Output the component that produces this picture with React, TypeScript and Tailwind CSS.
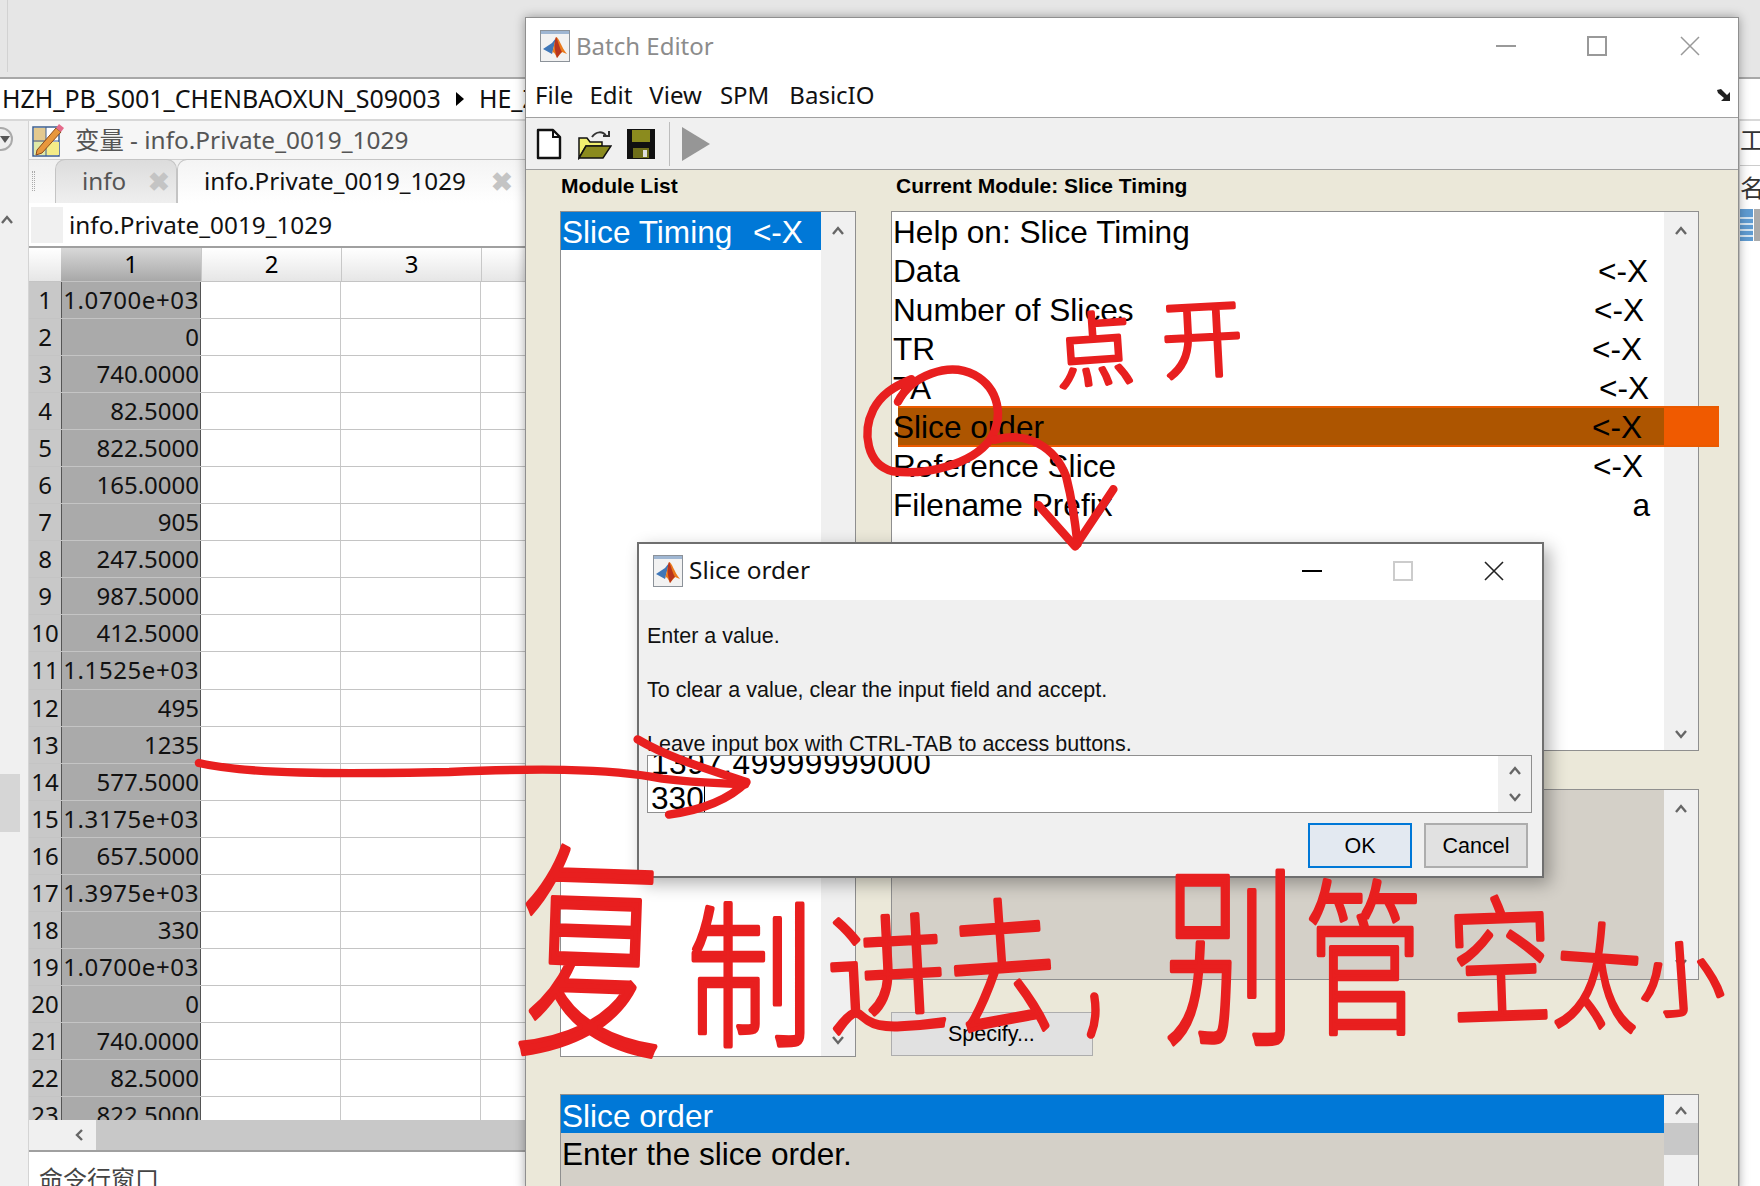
import React from 'react';

const cells = [
  '1.0700e+03', '0', '740.0000', '82.5000', '822.5000', '165.0000', '905', '247.5000',
  '987.5000', '412.5000', '1.1525e+03', '495', '1235', '577.5000', '1.3175e+03', '657.5000',
  '1.3975e+03', '330', '1.0700e+03', '0', '740.0000', '82.5000', '822.5000',
];

const moduleRows = [
  { label: 'Help on: Slice Timing', mark: '', pad: 'pr-[16px]' },
  { label: 'Data', mark: '<-X', pad: 'pr-[16px]' },
  { label: 'Number of Slices', mark: '<-X', pad: 'pr-[20px]' },
  { label: 'TR', mark: '<-X', pad: 'pr-[22px]' },
  { label: 'TA', mark: '<-X', pad: 'pr-[15px]' },
  { label: 'Slice order', mark: '<-X', pad: 'pr-[22px]' },
  { label: 'Reference Slice', mark: '<-X', pad: 'pr-[21px]' },
  { label: 'Filename Prefix', mark: 'a', pad: 'pr-[14px]' },
];

function Chevron({ down = false }: { down?: boolean }) {
  return (
    <svg width="14" height="10" viewBox="0 0 14 10" className="block">
      <polyline
        points={down ? '2,2 7,8 12,2' : '2,8 7,2 12,8'}
        fill="none"
        stroke="#666"
        strokeWidth="2.4"
      />
    </svg>
  );
}

function MatlabIcon() {
  return (
    <svg width="30" height="32" viewBox="0 0 30 32" className="block shrink-0">
      <rect x="0.5" y="0.5" width="29" height="31" fill="#f2f2f2" stroke="#8c9299" />
      <rect x="1" y="1" width="28" height="3" fill="#9fb6d2" />
      <path d="M3 19 L12 13 L16 8 L12 24 Z" fill="#3f77b8" />
      <path d="M16 7 C19 7 21 17 27 24 L22 22 L17 28 C15 23 13 20 12 24 Z" fill="#ea7a1c" />
      <path d="M16 7 C14 12 14 18 17 28 C19 25 20 23 22 22 C19 17 18 10 16 7 Z" fill="#b8351e" />
    </svg>
  );
}

function ScrollStrip({ children }: { children?: React.ReactNode }) {
  return (
    <div className="flex w-[34px] shrink-0 flex-col items-center justify-between bg-[#f0f0f0] pb-[11px] pt-[14px]">
      {children}
    </div>
  );
}

function Hand({ ch, cx, cy, w, h, rot = 0 }: { ch: string; cx: number; cy: number; w: number; h: number; rot?: number }) {
  const sx = w / 100;
  const sy = h / 100;
  return (
    <text
      transform={`translate(${cx} ${cy}) rotate(${rot}) scale(${sx} ${sy})`}
      x="0"
      y="38"
      fontSize="100"
      fontWeight="300"
      textAnchor="middle"
      fill="#e81f1f"
      stroke="#e81f1f"
      strokeWidth={3.5 / ((sx + sy) / 2)}
      strokeLinejoin="round"
      fontFamily="'Noto Sans CJK SC', sans-serif"
    >
      {ch}
    </text>
  );
}

function Annotations() {
  return (
    <svg
      width="1760"
      height="1186"
      viewBox="0 0 1568 1057"
      className="pointer-events-none absolute left-0 top-0"
    >
      <g fill="none" stroke="#e81f1f" strokeWidth="7.5" strokeLinecap="round" strokeLinejoin="round">
        <path d="M800 358 C812 335 845 322 868 334 C890 346 895 372 882 392 C866 414 825 424 795 420 C772 414 768 385 778 365 C785 352 795 345 812 338" />
        <path d="M886 392 C915 384 940 398 950 425 C955 445 958 465 960 485" />
        <path d="M925 450 L958 487 L992 436" />
        <path d="M177 680 C220 690 300 690 400 688 C470 685 540 684 590 694 C620 698 645 698 664 699" />
        <path d="M568 659 C600 678 640 688 665 697 C650 712 625 722 596 726" />
        <path d="M975 888 C977 900 976 912 972 922" />
      </g>
      <Hand ch="点" cx={975} cy={311} w={70} h={72} rot={-4} />
      <Hand ch="开" cx={1071} cy={301} w={72} h={76} rot={-3} />
      <Hand ch="复" cx={527} cy={848} w={132} h={205} rot={2} />
      <Hand ch="制" cx={668} cy={868} w={112} h={140} rot={0} />
      <Hand ch="进" cx={790} cy={868} w={108} h={118} rot={-3} />
      <Hand ch="去" cx={893} cy={862} w={94} h={132} rot={-4} />
      <Hand ch="别" cx={1096} cy={852} w={118} h={172} rot={0} />
      <Hand ch="管" cx={1215} cy={853} w={106} h={150} rot={0} />
      <Hand ch="空" cx={1337} cy={856} w={92} h={124} rot={-2} />
      <Hand ch="太" cx={1424} cy={870} w={76} h={104} rot={4} />
      <Hand ch="小" cx={1498} cy={872} w={76} h={72} rot={-4} />
    </svg>
  );
}

function VariablesPanel() {
  return (
    <div className="flex min-w-0 flex-1 flex-col">
      <div className="flex h-[38px] shrink-0 items-center gap-[11px] bg-[#f6f6f6] pl-[3px] text-[24.4px] text-[#555]">
        <svg width="32" height="34" viewBox="0 0 32 34" className="shrink-0">
          <rect x="1" y="4" width="26" height="29" fill="#fff" stroke="#3d5f8f" strokeWidth="1.5" />
          <rect x="2" y="5" width="12" height="14" fill="#e3c98f" />
          <rect x="14" y="19" width="13" height="13" fill="#f4ec88" />
          <rect x="2" y="19" width="12" height="13" fill="#dfe9a8" />
          <path d="M1 18 H27 M14 4 V33" stroke="#3d5f8f" strokeWidth="1" />
          <path d="M5 27 L24 5 L29 9 L10 30 L4 32 Z" fill="#e8973c" stroke="#8a4a1a" strokeWidth="1" />
          <path d="M24 5 L27 1 L32 5 L29 9 Z" fill="#e56a8a" />
        </svg>
        <span>变量 - info.Private_0019_1029</span>
      </div>
      <div className="flex h-[44px] shrink-0 items-end border-t border-[#cfcfcf] bg-[linear-gradient(#f0f0f0,#fafafa)] pl-[3px] text-[24.2px]">
        <div className="mb-[12px] mr-[20px] h-[20px] w-[3px] border-x border-dotted border-[#aaa]" />
        <div className="flex h-[44px] w-[122px] items-center rounded-t-[10px] border border-b-0 border-[#c4c4c4] bg-[linear-gradient(#dcdcdc,#efefef)] pb-[1px] pl-[26px] pr-[6px] text-[#555]">
          <span className="flex-1">info</span>
          <span className="text-[26px] font-bold leading-none text-[#c4c4c4]">✖</span>
        </div>
        <div className="flex h-[44px] flex-1 items-center rounded-t-[10px] border border-b-0 border-[#c4c4c4] bg-[linear-gradient(#f4f4f4,#fff)] pb-[1px] pl-[26px] text-[#111]">
          <span className="w-[287px]">info.Private_0019_1029</span>
          <span className="text-[26px] font-bold leading-none text-[#c4c4c4]">✖</span>
        </div>
      </div>
      <div className="flex h-[43px] shrink-0 items-center gap-[6px] bg-white pl-[2px] pt-[1px] text-[24.3px] text-[#111]">
        <div className="h-[36px] w-[32px] bg-[#f0f0f0]" />
        <span>info.Private_0019_1029</span>
      </div>
      <div className="h-[874px] shrink-0 overflow-hidden border-t-2 border-[#a0a0a0] bg-white">
        <div className="grid h-[33px] grid-cols-[32px_140px_140px_140px_140px_140px_140px_140px_140px_140px_140px_140px_140px] bg-[linear-gradient(#fff,#e6e6e6)] text-center text-[24px] leading-[31px] text-black">
          <div />
          <div className="bg-[linear-gradient(#d8d8d8,#a8a8a8)]">1</div>
          <div className="border-l border-[#c8c8c8]">2</div>
          <div className="border-l border-[#c8c8c8]">3</div>
          <div className="border-l border-[#c8c8c8]" />
        </div>
        {cells.map((v, i) => (
          <div key={i} className="grid h-[37.05px] grid-cols-[32px_140px_1fr] border-t border-[#c4c4c4] text-[24px] leading-[36px] text-[#111]">
            <div className="bg-[#c8c8c8] text-center">{i + 1}</div>
            <div className={v.includes('e') ? 'overflow-hidden whitespace-nowrap border-x border-[#555] bg-[#aaaaaa] pr-[1px] text-right tracking-[0.6px]' : 'overflow-hidden border-x border-[#555] bg-[#aaaaaa] pr-[1px] text-right'}>{v}</div>
            <div className="grid grid-cols-[140px_140px_140px]">
              <div className="border-r border-[#c8c8c8]" />
              <div className="border-r border-[#c8c8c8]" />
              <div />
            </div>
          </div>
        ))}
      </div>
      <div className="flex h-[32px] shrink-0 border-b-2 border-[#a0a0a0] bg-[#c8c8c8]">
        <div className="flex w-[67px] items-center justify-end bg-[#f0f0f0] pr-[12px]">
          <svg width="10" height="14" viewBox="0 0 10 14">
            <polyline points="8,2 3,7 8,12" fill="none" stroke="#666" strokeWidth="2.4" />
          </svg>
        </div>
      </div>
      <div className="mt-[8px] min-h-0 flex-1 overflow-hidden bg-white pl-[10px] text-[24px] leading-[38px] text-[#444]">命令行窗口</div>
    </div>
  );
}

function BatchEditor() {
  return (
    <div className="absolute left-[525px] top-[17px] flex h-[1175px] w-[1214px] flex-col border border-[#8f8f8f] bg-white font-['Noto_Sans','Noto_Sans_CJK_SC',sans-serif] shadow-[0_0_10px_rgba(0,0,0,0.35)]">
      <div className="flex h-[54px] items-center pl-[14px] pt-[1px] text-[24px] text-[#8c8c8c]">
        <MatlabIcon />
        <span className="ml-[6px]">Batch Editor</span>
        <div className="ml-auto flex items-center pr-[38px]">
          <div className="h-[2px] w-[20px] bg-[#999]" />
          <div className="ml-[71px] h-[20px] w-[20px] border-2 border-[#999]" />
          <svg width="20" height="20" viewBox="0 0 20 20" className="ml-[73px]">
            <path d="M1 1 L19 19 M19 1 L1 19" stroke="#999" strokeWidth="1.5" />
          </svg>
        </div>
      </div>
      <div className="flex h-[46px] items-center border-b border-[#a0a0a0] pl-[9px] pr-[6px] text-[24px] text-[#111]">
        <span className="mr-[16px]">File</span>
        <span className="mr-[17px]">Edit</span>
        <span className="mr-[18px]">View</span>
        <span className="mr-[20px]">SPM</span>
        <span>BasicIO</span>
        <svg width="16" height="14" viewBox="0 0 16 14" className="ml-auto">
          <path d="M1 2 L5 1 L11 7 L14 4 L14 13 L5 13 L8 10 L2 5 Z" fill="#222" />
        </svg>
      </div>
      <div className="flex h-[52px] items-center border-b border-[#a0a0a0] bg-[#f0f0f0] pl-[10px]">
        <svg width="26" height="32" viewBox="0 0 26 32" className="mr-[16px]">
          <path d="M2 2 H17 L24 9 V30 H2 Z" fill="#fff" stroke="#111" strokeWidth="2.4" strokeLinejoin="round" />
          <path d="M17 2 V9 H24" fill="none" stroke="#111" strokeWidth="2" />
        </svg>
        <svg width="34" height="32" viewBox="0 0 34 32" className="mr-[14px]">
          <path d="M1 10 H9 L12 14 H24 V18 H8 L1 30 Z" fill="#f2f070" stroke="#111" strokeWidth="1.5" />
          <path d="M8 18 H33 L25 30 H1 Z" fill="#8b8b1e" stroke="#111" strokeWidth="1.5" />
          <path d="M14 9 C18 3 25 3 28 8 M25 8 H31 V3" fill="none" stroke="#333" strokeWidth="2" />
        </svg>
        <svg width="30" height="32" viewBox="0 0 30 32" className="mr-[13px]">
          <rect x="1" y="1" width="28" height="30" fill="#111" />
          <rect x="6" y="2" width="18" height="12" fill="#8b8b1e" />
          <rect x="7" y="20" width="16" height="10" fill="#6f6f1a" />
          <rect x="17" y="22" width="4" height="7" fill="#ddd" />
        </svg>
        <div className="mr-[11px] h-[44px] w-px bg-[#bdbdbd]" />
        <svg width="30" height="36" viewBox="0 0 30 36">
          <path d="M1 1 L29 18 L1 35 Z" fill="#969696" />
        </svg>
      </div>
      <div className="flex-1 overflow-hidden bg-[#ebe8d9] pl-[34px] font-['Liberation_Sans',sans-serif] text-black">
        <div className="flex">
          <div className="w-[296px]">
            <div className="h-[41px] pl-[1px] pt-[4px] text-[21px] font-bold leading-[24px]">Module List</div>
            <div className="flex h-[846px] border border-[#8f8f8f] bg-white">
              <div className="flex-1 text-[31.6px] leading-[41px]">
                <div className="h-[38px] whitespace-pre bg-[#0078d7] pl-[1px] text-white">Slice Timing  <span className="ml-[3px]">&lt;-X</span></div>
              </div>
              <ScrollStrip>
                <Chevron />
                <Chevron down />
              </ScrollStrip>
            </div>
          </div>
          <div className="ml-[35px] w-[808px]">
            <div className="h-[41px] pl-[5px] pt-[4px] text-[21px] font-bold leading-[24px]">Current Module: Slice Timing</div>
            <div className="relative flex h-[540px] border border-[#8f8f8f] bg-white">
              <div className="flex-1 text-[31.6px] leading-[41px]">
                {moduleRows.map((r) => (
                  <div key={r.label} className={`relative flex h-[39px] justify-between pl-[1px] ${r.pad}`}>
                    {r.label === 'Slice order' && (
                      <div className="absolute bottom-[-1px] left-[6px] right-[-55px] top-[-1px] flex border-y-2 border-[#ea5a00]">
                        <div className="flex-1 bg-[#ad5500]" />
                        <div className="w-[55px] bg-[#f05a00]" />
                      </div>
                    )}
                    <span className="relative">{r.label}</span>
                    <span className="relative">{r.mark}</span>
                  </div>
                ))}
              </div>
              <ScrollStrip>
                <Chevron />
                <Chevron down />
              </ScrollStrip>
            </div>
            <div className="mt-[38px] flex h-[191px] border border-[#8f8f8f] bg-[#d4d0c8]">
              <div className="flex-1" />
              <ScrollStrip>
                <Chevron />
                <Chevron down />
              </ScrollStrip>
            </div>
            <div className="mt-[32px] flex h-[44px] w-[202px] items-center border border-[#adadad] bg-[#e1e1e1] pl-[56px] text-[21.5px]">
              Specify...
            </div>
          </div>
        </div>
        <div className="mt-[37px] flex h-[200px] w-[1139px] border border-[#8f8f8f] bg-[#d4d0c8]">
          <div className="flex-1 text-[31.6px] leading-[43px]">
            <div className="h-[38px] bg-[#0078d7] pl-[1px] text-white">Slice order</div>
            <div className="pl-[1px]">Enter the slice order.</div>
          </div>
          <div className="w-[34px] shrink-0 bg-[#f0f0f0] pt-[11px]">
            <div className="flex justify-center"><Chevron /></div>
            <div className="mt-[7px] h-[32px] bg-[#c8c8c8]" />
          </div>
        </div>
      </div>
    </div>
  );
}

function SliceDialog() {
  return (
    <div className="absolute left-[637px] top-[542px] flex h-[336px] w-[907px] flex-col border-2 border-[#6f6f6f] bg-[#f0f0f0] font-['Liberation_Sans',sans-serif] text-black shadow-[6px_6px_16px_rgba(0,0,0,0.3)]">
      <div className="flex h-[56px] items-center bg-white pb-[3px] pl-[14px] font-['Noto_Sans',sans-serif] text-[24.4px] text-[#111]">
        <MatlabIcon />
        <span className="ml-[6px]">Slice order</span>
        <div className="ml-auto flex items-center gap-[71px] pr-[38px]">
          <div className="h-[2px] w-[20px] bg-black" />
          <div className="h-[20px] w-[20px] border-2 border-[#ccc]" />
          <svg width="20" height="20" viewBox="0 0 20 20">
            <path d="M1 1 L19 19 M19 1 L1 19" stroke="#222" strokeWidth="1.6" />
          </svg>
        </div>
      </div>
      <div className="flex h-[155px] flex-col pl-[8px] pt-[9px] text-[21.5px] leading-[54px] text-[#111]">
        <p>Enter a value.</p>
        <p>To clear a value, clear the input field and accept.</p>
        <p>Leave input box with CTRL-TAB to access buttons.</p>
      </div>
      <div className="ml-[8px] flex h-[58px] w-[885px] border border-[#8f8f8f] bg-white">
        <div className="relative flex-1 overflow-hidden pl-[3px] text-[31.6px] leading-[35px]">
          <div className="mt-[-10px] tracking-[0.5px]">1397.49999999000</div>
          <div className="relative w-fit pr-[1px]">
            330
            <span className="absolute bottom-[2px] right-0 h-[30px] w-px bg-black" />
          </div>
        </div>
        <div className="flex w-[33px] shrink-0 flex-col items-center justify-between bg-[#f0f0f0] py-[10px]">
          <Chevron />
          <Chevron down />
        </div>
      </div>
      <div className="mr-[14px] mt-[10px] flex justify-end gap-[12px] text-[21.5px]">
        <div className="flex h-[45px] w-[104px] items-center justify-center border-2 border-[#0078d7] bg-[#e3e9f1] pt-[2px]">OK</div>
        <div className="flex h-[45px] w-[104px] items-center justify-center border-2 border-[#adadad] bg-[#e1e1e1] pt-[2px]">Cancel</div>
      </div>
    </div>
  );
}

export default function App() {
  return (
    <div className="relative h-[1186px] w-[1760px] overflow-hidden bg-white font-['Noto_Sans','Noto_Sans_CJK_SC',sans-serif]">
      <div className="h-[77px] bg-[#e6e6e6] pl-[7px]">
        <div className="h-[72px] w-px bg-[#d2d2d2]" />
      </div>
      <div className="flex h-[44px] items-center whitespace-nowrap border-y-2 border-[#a8a8a8] border-b-[#d8d8d8] bg-white pl-[2px] text-[25px] text-[#111]">
        <span>HZH_PB_S001_CHENBAOXUN_S09003</span>
        <span className="mx-[15px] h-0 w-0 border-y-[7px] border-l-[8px] border-y-transparent border-l-black" />
        <span>HE_Z</span>
      </div>
      <div className="flex h-[1065px]">
        <div className="flex w-[29px] shrink-0 border-r border-[#d4d4d4] bg-[#f0f0f0]">
          <div className="w-[22px]">
            <div className="ml-[-11px] mt-[6px] flex h-[24px] w-[24px] items-center justify-center rounded-full border-2 border-[#aaa] bg-[#eee]">
              <div className="ml-[8px] h-0 w-0 border-x-[5px] border-t-[7px] border-x-transparent border-t-[#555]" />
            </div>
            <div className="ml-0 mt-[64px]">
              <Chevron />
            </div>
            <div className="mt-[549px] h-[58px] w-[20px] bg-[#d6d6d6]" />
          </div>
        </div>
        <VariablesPanel />
        <div className="w-[21px] shrink-0 border-l border-[#ddd] bg-white text-[24px] text-[#333]">
          <div className="h-[38px] overflow-hidden whitespace-nowrap leading-[38px]">工作区</div>
          <div className="mt-[6px] h-[44px] overflow-hidden whitespace-nowrap border-t border-[#ccc] leading-[44px]">名称</div>
          <div className="flex h-[34px]">
            <div className="h-[32px] w-[13px] border-y-[4px] border-[#5f9bd1] bg-[repeating-linear-gradient(#5f9bd1_0,#5f9bd1_4px,#d5e5f2_4px,#d5e5f2_6px)]" />
            <div className="ml-px h-[32px] flex-1 bg-[#aaa]" />
          </div>
        </div>
      </div>
      <BatchEditor />
      <SliceDialog />
      <Annotations />
    </div>
  );
}
